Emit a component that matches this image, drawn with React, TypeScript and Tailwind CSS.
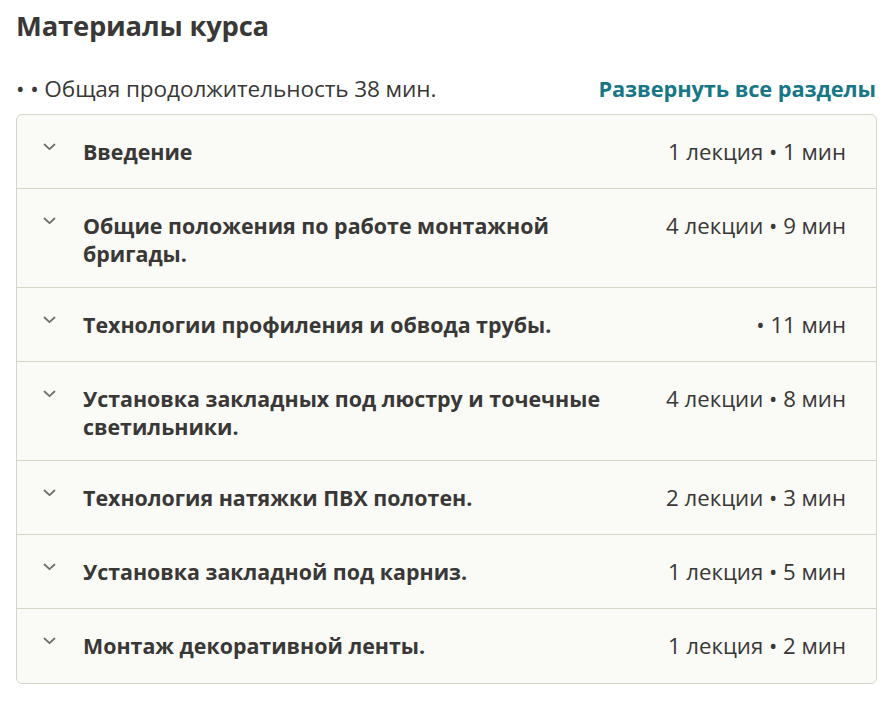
import React from "react";

type Section = { title: string; meta: string };

const sections: Section[] = [
  { title: "Введение", meta: "1 лекция • 1 мин" },
  { title: "Общие положения по работе монтажной бригады.", meta: "4 лекции • 9 мин" },
  { title: "Технологии профиления и обвода трубы.", meta: "• 11 мин" },
  { title: "Установка закладных под люстру и точечные светильники.", meta: "4 лекции • 8 мин" },
  { title: "Технология натяжки ПВХ полотен.", meta: "2 лекции • 3 мин" },
  { title: "Установка закладной под карниз.", meta: "1 лекция • 5 мин" },
  { title: "Монтаж декоративной ленты.", meta: "1 лекция • 2 мин" },
];

const Chevron = () => (
  <svg width="13" height="8" viewBox="0 0 13 8" fill="none" className="mt-[5px] shrink-0">
    <path d="M1.5 1.5 6.5 6.2l5-4.7" stroke="#6d6f70" strokeWidth="1.8" strokeLinecap="round" strokeLinejoin="round" />
  </svg>
);

const App: React.FC = () => {
  return (
    <div
      className="w-[893px] h-[703px] bg-white text-[#393836] px-4 pt-[8px]"
      style={{ fontFamily: '"Open Sans", "Noto Sans", sans-serif' }}
    >
      <h2 className="text-[27.4px] font-bold leading-[36px] tracking-[-0.2px]">Материалы курса</h2>
      <div className="flex items-center justify-between mt-[31px] pr-[1px]">
        <span className="text-[22.6px] leading-[28px] tracking-[-0.1px]">• • Общая продолжительность 38 мин.</span>
        <span className="text-[21.8px] font-bold leading-[28px] text-[#187786] tracking-[-0.1px]">Развернуть все разделы</span>
      </div>
      <div className="mt-[11px] border border-[#d7d5c8] rounded-[6px] bg-[#fafaf6] overflow-hidden">
        {sections.map((s, i) => (
          <div
            key={i}
            className={`flex items-start pl-[26px] pr-[30px] pt-[23px] pb-[19px] ${
              i < sections.length - 1 ? "border-b border-[#d7d5c8] min-h-[74px]" : "min-h-[74px]"
            }`}
          >
            <Chevron />
            <div className="ml-[27px] flex-1 text-[21.4px] font-bold leading-[28px] pr-6">
              <div className="max-w-[535px]">{s.title}</div>
            </div>
            <div className="ml-auto text-[22.2px] leading-[28px] whitespace-nowrap">{s.meta}</div>
          </div>
        ))}
      </div>
    </div>
  );
};

export default App;
